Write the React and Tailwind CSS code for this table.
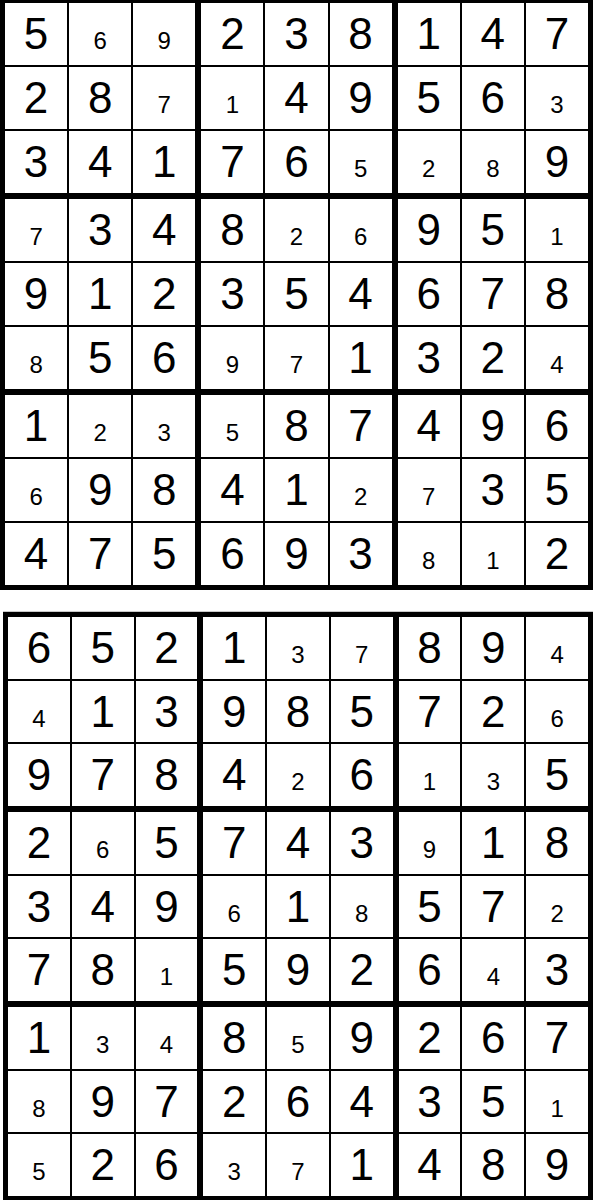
import React from 'react';

// rows of each puzzle, "." marks the next digit as a small one
const puzzles = [
  [
    '5.6.9238147',
    '28.7.14956.3',
    '34176.5.2.89',
    '.7348.2.695.1',
    '912354678',
    '.856.9.7132.4',
    '1.2.3.587496',
    '.69841.2.735',
    '475693.8.12',
  ],
  [
    '6521.3.789.4',
    '.41398572.6',
    '9784.26.1.35',
    '2.65743.918',
    '349.61.857.2',
    '78.15926.43',
    '1.3.48.59267',
    '.89726435.1',
    '.526.3.71489',
  ],
];

function parseRow(row) {
  const cells = [];
  let small = false;
  for (const ch of row) {
    if (ch === '.') {
      small = true;
      continue;
    }
    cells.push({ value: ch, small });
    small = false;
  }
  return cells;
}

function Cell({ cell }) {
  return (
    <div className="bg-white text-center text-[44px] leading-[62px] overflow-hidden">
      {cell.small ? <span className="text-[24px]">{cell.value}</span> : cell.value}
    </div>
  );
}

function Box({ grid, br, bc }) {
  const cells = [];
  for (let r = 0; r < 3; r++) {
    for (let c = 0; c < 3; c++) {
      cells.push(<Cell key={r + '-' + c} cell={grid[br * 3 + r][bc * 3 + c]} />);
    }
  }
  return <div className="grid grid-cols-3 grid-rows-3 gap-[2px]">{cells}</div>;
}

function Sudoku({ rows, className }) {
  const grid = rows.map(parseRow);
  const boxes = [];
  for (let br = 0; br < 3; br++) {
    for (let bc = 0; bc < 3; bc++) {
      boxes.push(<Box key={br + '-' + bc} grid={grid} br={br} bc={bc} />);
    }
  }
  return (
    <div className={'grid grid-cols-3 grid-rows-3 gap-[6px] bg-black ' + className}>
      {boxes}
    </div>
  );
}

export default function App() {
  return (
    <div
      className="w-[595px] h-[1202px] bg-white text-black flex flex-col"
      style={{ fontFamily: '"Liberation Sans", Arial, sans-serif' }}
    >
      <Sudoku rows={puzzles[0]} className="w-[593px] h-[590px] pt-[3px] pb-[5px] px-[5px]" />
      <div className="mt-[21px] ml-[3px] w-[590px] h-px bg-[#c8c8c8]" />
      <Sudoku rows={puzzles[1]} className="ml-[3px] w-[590px] h-[588px] pt-[5px] pb-[4px] px-[5px]" />
    </div>
  );
}
